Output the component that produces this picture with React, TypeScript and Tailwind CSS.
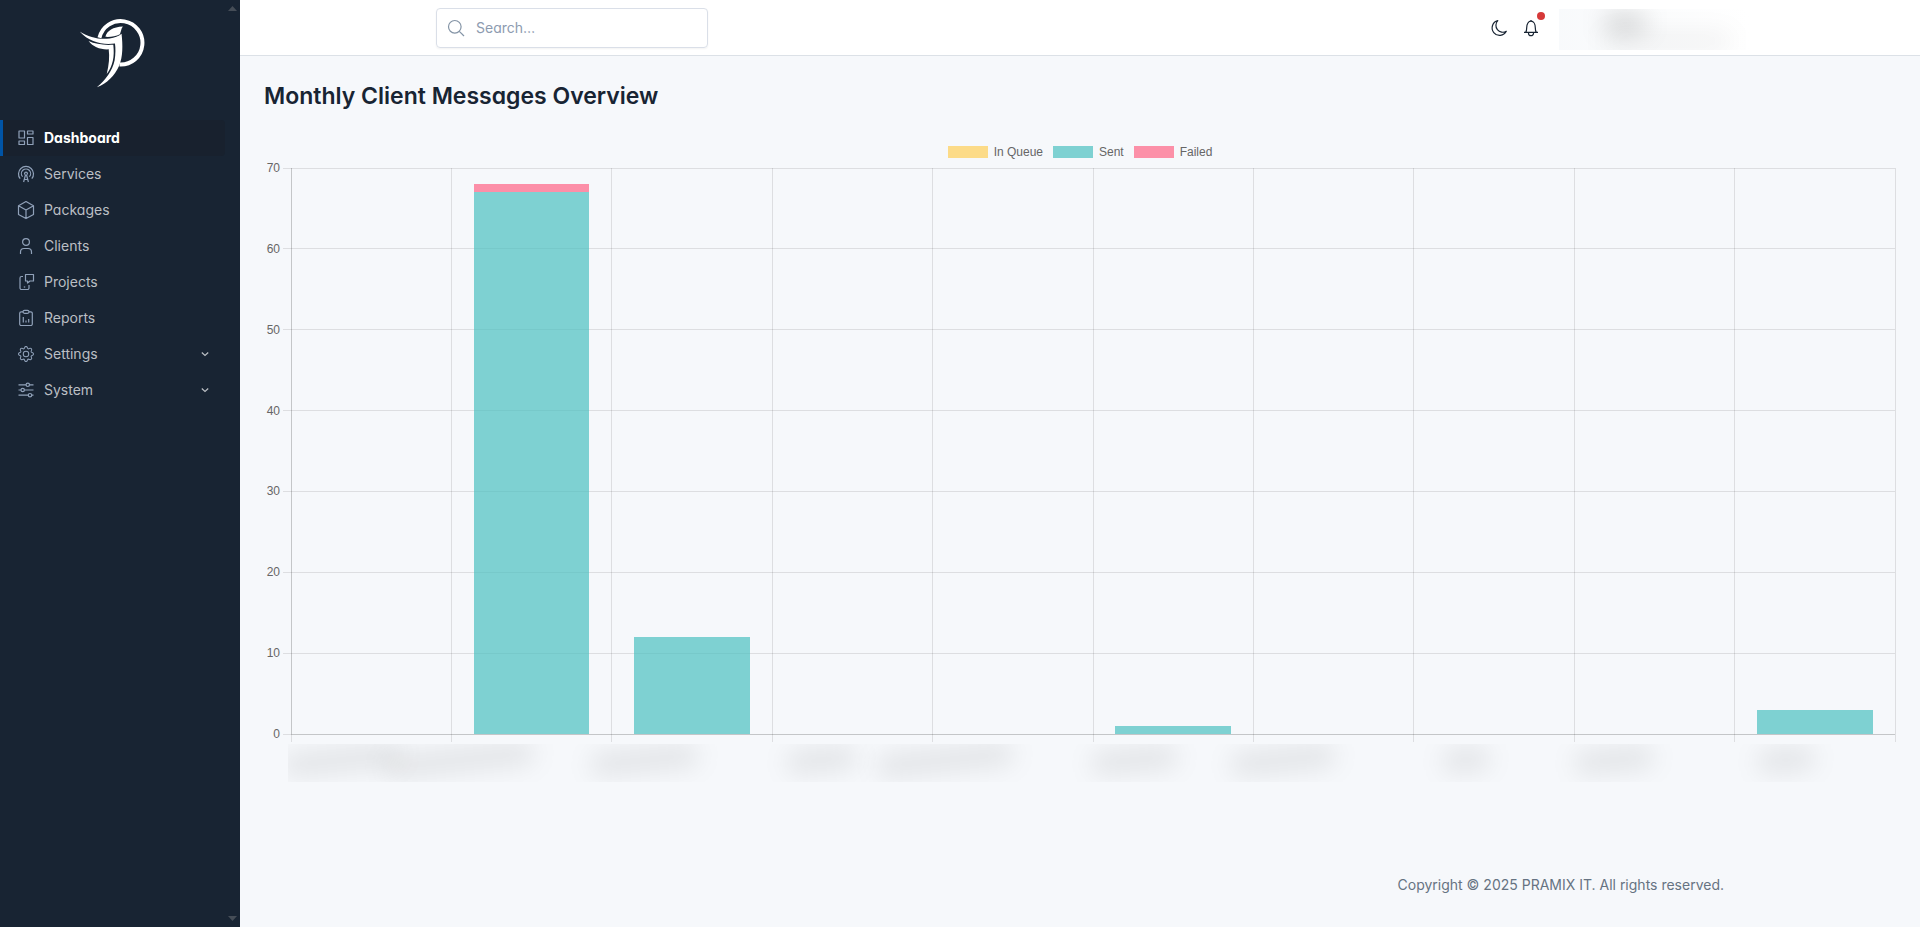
import type { ReactNode } from "react";
import { BsGear } from "react-icons/bs";

function Icon({ children, className = "text-slate-400" }: { children: ReactNode; className?: string }) {
  return (
    <svg
      viewBox="0 0 16 16"
      className={`size-4 shrink-0 overflow-visible ${className}`}
      fill="none"
      stroke="currentColor"
      strokeWidth="1.2"
      strokeLinejoin="round"
      aria-hidden="true"
    >
      {children}
    </svg>
  );
}

const navItems: { label: string; icon: ReactNode; active?: boolean; expandable?: boolean }[] = [
  {
    label: "Dashboard",
    active: true,
    icon: (
      <Icon>
        <path d="M1 1h5.5v7H1zM9.5 1H15v3H9.5zM1 11h5.5v3.5H1zM9.5 7.5H15v7H9.5z" />
      </Icon>
    ),
  },
  {
    label: "Services",
    icon: (
      <Icon>
        <path d="M2.200 12.700a7.500 7.500 0 1 1 11.600 0M4.600 10.700a4.600 4.600 0 1 1 6.800 0" />
        <path d="M7 8.500a1.400 1.400 0 1 1 2 0" />
        <path d="M7.600 8.500 5.600 16M8.400 8.500l2 7.500M6.200 13.500h3.600" />
      </Icon>
    ),
  },
  {
    label: "Packages",
    icon: (
      <Icon>
        <path d="M8-.4l7.500 4.200v8.600L8 16.600.5 12.400V3.800zM.5 3.800 8 8l7.500-4.200M8 8v8.600" />
      </Icon>
    ),
  },
  {
    label: "Clients",
    icon: (
      <Icon>
        <circle cx="8" cy="4" r="3.400" />
        <path d="M2.500 16v-2a3.500 3.500 0 0 1 3.500-3.500h4a3.500 3.500 0 0 1 3.500 3.500v2" />
      </Icon>
    ),
  },
  {
    label: "Projects",
    icon: (
      <Icon>
        <path d="M5 2.500H3.500A1.500 1.500 0 0 0 2 4v10a1.500 1.500 0 0 0 1.500 1.500h6A1.500 1.500 0 0 0 11 14v-3" />
        <path d="M7.500.500h8v6.500h-3.500l-2.500 2V7h-2z" />
        <path d="M5.800 13h1.400" />
      </Icon>
    ),
  },
  {
    label: "Reports",
    icon: (
      <Icon>
        <path d="M5 1.800H3.200A1.500 1.500 0 0 0 1.700 3.300v10.700a1.500 1.500 0 0 0 1.500 1.500h9.600a1.500 1.500 0 0 0 1.500-1.500V3.300a1.500 1.500 0 0 0-1.500-1.500H11" />
        <rect x="5" y=".3" width="6" height="3" rx="1.500" />
        <path d="M5.300 7v5.500M8 10.500v2M10.700 9v3.500" />
      </Icon>
    ),
  },
  {
    label: "Settings",
    expandable: true,
    icon: <BsGear className="size-4 shrink-0 text-slate-400" aria-hidden="true" />,
  },
  {
    label: "System",
    expandable: true,
    icon: (
      <Icon>
        <circle cx="9.800" cy="2.800" r="1.700" />
        <circle cx="4.700" cy="8" r="1.700" />
        <circle cx="12" cy="13.200" r="1.700" />
        <path d="M.5 2.800h7.600M11.500 2.800h4M.5 8H3M6.400 8h9.100M.5 13.200h9.800M13.700 13.200h1.800" />
      </Icon>
    ),
  },
];

function Logo() {
  return (
    <svg viewBox="57 24 200 212" className="h-[70px] w-[66px]" fill="#fff" role="img" aria-label="Pramix IT">
      <path
        d="M119 84A66 66 0 1 1 180 165"
        fill="none"
        stroke="#fff"
        strokeWidth="12"
      />
      <path d="M137 81C142 62 160 52 190 50C184 57 185 65 181 73C168 79 154 82 137 81Z" />
      <path d="M59 65C88 84 122 90 150 86C165 84 177 80 186 72C190 108 190 142 179 168C165 200 142 222 111 234C138 212 158 184 165 152C168 133 168 115 166 101C130 106 88 98 59 65Z" />
      <path d="M86 94C106 103 132 107 161 105C165 142 160 168 141 194C148 165 150 142 147 119C120 120 100 112 86 94Z" />
    </svg>
  );
}

function Sidebar() {
  return (
    <aside className="flex w-60 shrink-0 bg-[#182433]">
      <div className="min-w-0 flex-1">
        <a href="#home" className="flex h-[120px] justify-center pt-[18px] pr-px">
          <Logo />
        </a>
        <nav aria-label="Main">
          <ul>
            {navItems.map((item) => (
              <li key={item.label}>
                <a
                  href={`#${item.label.toLowerCase()}`}
                  aria-current={item.active ? "page" : undefined}
                  className={
                    item.active
                      ? "flex h-9 items-center gap-2.5 rounded-r border-l-[3px] border-[#0054a6] bg-[#18212e] pr-4 pl-[15px] font-bold text-white"
                      : "flex h-9 items-center gap-2.5 border-l-[3px] border-transparent pr-4 pl-[15px] text-[#bbbfc4]"
                  }
                >
                  {item.icon}
                  <span className="flex-1">{item.label}</span>
                  {item.expandable && (
                    <svg viewBox="0 0 8 8" className="size-2" fill="none" stroke="currentColor" strokeWidth="1.200" aria-hidden="true">
                      <path d="M.8 2.500 4 5.500l3.200-3" />
                    </svg>
                  )}
                </a>
              </li>
            ))}
          </ul>
        </nav>
      </div>
      <div className="flex w-[15px] flex-col items-center justify-between py-1.5" aria-hidden="true">
        <svg viewBox="0 0 9 5" className="h-[5px] w-[9px]" fill="#454d57">
          <path d="M0 5 4.500 0 9 5z" />
        </svg>
        <svg viewBox="0 0 9 5" className="h-[5px] w-[9px]" fill="#454d57">
          <path d="M0 0h9L4.500 5z" />
        </svg>
      </div>
    </aside>
  );
}

function Header() {
  return (
    <header className="h-14 shrink-0 border-b border-[#dce1e7] bg-white">
      <div className="mx-auto flex h-full max-w-[1320px] items-center justify-between px-4">
        <div className="flex h-10 w-[272px] items-center gap-3 rounded border border-[#dadfe8] px-[11px] shadow-xs">
          <Icon className="text-[#8494a6]">
            <circle cx="6.800" cy="6.800" r="6.300" />
            <path d="m11.300 11.300 4.700 4.700" />
          </Icon>
          <input
            type="search"
            aria-label="Search"
            placeholder="Search…"
            className="w-full min-w-0 bg-transparent outline-none placeholder:text-[#8d9bb0]"
          />
        </div>
        <div className="-mr-[25px] flex items-center">
          <button type="button" aria-label="Dark mode" className="mr-4">
            <Icon className="text-[#182433]">
              <path d="M6.800.600A7.500 7.500 0 1 0 15.300 11.300 6.900 6.900 0 0 1 6.800.600Z" />
            </Icon>
          </button>
          <button type="button" aria-label="Notifications" className="relative mr-5">
            <Icon className="text-[#182433]">
              <path d="M1 12.400h14M2.700 12.400c.8-1.200 1-2.400 1-4.600C3.700 3.700 5.500 1.200 8 1.200s4.300 2.500 4.300 6.600c0 2.200.2 3.400 1 4.600M5.500 12.400v.800a2.500 2.500 0 0 0 5 0v-.800" />
              <path d="M8 0v1.200" />
            </Icon>
            <span className="absolute -top-2 left-3.5 size-2 rounded-full bg-[#d63939]" />
          </button>
          <div className="mt-1 h-[41px] w-[190px] overflow-hidden bg-linear-to-r from-slate-50 to-white" aria-hidden="true">
            <div className="mt-1 ml-11 h-5 w-11 rounded-full bg-black/15 blur-md" />
            <div className="ml-11 h-4 w-32 rounded-full bg-black/6 blur-md" />
          </div>
        </div>
      </div>
    </header>
  );
}

const yTicks = [70, 60, 50, 40, 30, 20, 10, 0];
const yMax = 70;

const months = [
  { sent: 0, failed: 0, labelStart: -4, labelWidth: 74 },
  { sent: 67, failed: 1, labelStart: -40, labelWidth: 94 },
  { sent: 12, failed: 0, labelStart: -12, labelWidth: 68 },
  { sent: 0, failed: 0, labelStart: 10, labelWidth: 44 },
  { sent: 0, failed: 0, labelStart: -34, labelWidth: 86 },
  { sent: 1, failed: 0, labelStart: 0, labelWidth: 54 },
  { sent: 0, failed: 0, labelStart: -14, labelWidth: 66 },
  { sent: 0, failed: 0, labelStart: 18, labelWidth: 30 },
  { sent: 0, failed: 0, labelStart: 0, labelWidth: 50 },
  { sent: 3, failed: 0, labelStart: 14, labelWidth: 36 },
];

const legend = [
  { label: "In Queue", color: "bg-[#ffce56]/70" },
  { label: "Sent", color: "bg-[#4bc0c0]/70" },
  { label: "Failed", color: "bg-[#ff6384]/70" },
];

function Chart() {
  return (
    <figure className="px-6 font-['Liberation_Sans',Arial,sans-serif] text-xs text-[#666]">
      <figcaption className="flex h-4 items-center justify-center gap-2.5">
        {legend.map((entry) => (
          <span key={entry.label} className="flex items-center gap-1.5">
            <span className={`h-3 w-10 ${entry.color}`} />
            {entry.label}
          </span>
        ))}
      </figcaption>
      <div className="mt-2 flex pr-px">
        <div className="-mt-2 flex h-[582px] w-4 flex-col justify-between text-right">
          {yTicks.map((tick) => (
            <span key={tick}>{tick}</span>
          ))}
        </div>
        <div className="ml-[11px] min-w-0 flex-1">
          <svg className="block h-[566px] w-full overflow-visible" role="img" aria-label="Messages per month" shapeRendering="crispEdges">
            {yTicks.map((tick) => {
              const y = `${(1 - tick / yMax) * 100}%`;
              return (
                <g key={tick} stroke="#000">
                  <line x1="-8" x2="0" y1={y} y2={y} strokeOpacity=".1" />
                  <line x1="0" x2="100%" y1={y} y2={y} strokeOpacity={tick === 0 ? ".2" : ".1"} />
                </g>
              );
            })}
            {Array.from({ length: months.length + 1 }, (_, i) => {
              const x = `${(i / months.length) * 100}%`;
              return (
                <g key={i} stroke="#000">
                  <line x1={x} x2={x} y1="0" y2="100%" strokeOpacity={i === 0 ? ".2" : ".1"} />
                  <svg y="100%" className="overflow-visible">
                    <line x1={x} x2={x} y1="0" y2="8" strokeOpacity=".1" />
                  </svg>
                </g>
              );
            })}
            {months.map((m, i) => {
              const x = `${((i + 0.14) / months.length) * 100}%`;
              const width = `${(0.72 / months.length) * 100}%`;
              return (
                <g key={i}>
                  <rect x={x} width={width} y={`${(1 - m.sent / yMax) * 100}%`} height={`${(m.sent / yMax) * 100}%`} fill="#4bc0c0" fillOpacity=".7" />
                  <rect x={x} width={width} y={`${(1 - (m.sent + m.failed) / yMax) * 100}%`} height={`${(m.failed / yMax) * 100}%`} fill="#ff6384" fillOpacity=".7" />
                </g>
              );
            })}
          </svg>
          <div className="mt-2.5 -ml-[3px] grid h-[38px] grid-cols-10 overflow-hidden" aria-hidden="true">
            {months.map((m, i) => (
              <div key={i} className="pt-1">
                <div
                  className="h-6 -rotate-6 rounded-full bg-black/8 blur-md"
                  style={{ marginLeft: `${m.labelStart}%`, width: `${m.labelWidth}%` }}
                />
              </div>
            ))}
          </div>
        </div>
      </div>
    </figure>
  );
}

export default function App() {
  return (
    <div className="flex min-h-screen bg-[#f6f8fb] font-['Inter',sans-serif] text-sm leading-5 text-[#182433] [font-feature-settings:'cv03','cv04','cv11']">
      <Sidebar />
      <div className="flex min-w-0 flex-1 flex-col">
        <Header />
        <main className="flex-1">
          <h1 className="px-6 pt-6 pb-8 text-[23px] leading-8 font-semibold">Monthly Client Messages Overview</h1>
          <Chart />
        </main>
        <footer className="pb-8">
          <p className="mx-auto max-w-[1320px] px-4 text-right text-[#667382]">
            Copyright © 2025 PRAMIX IT. All rights reserved.
          </p>
        </footer>
      </div>
    </div>
  );
}
